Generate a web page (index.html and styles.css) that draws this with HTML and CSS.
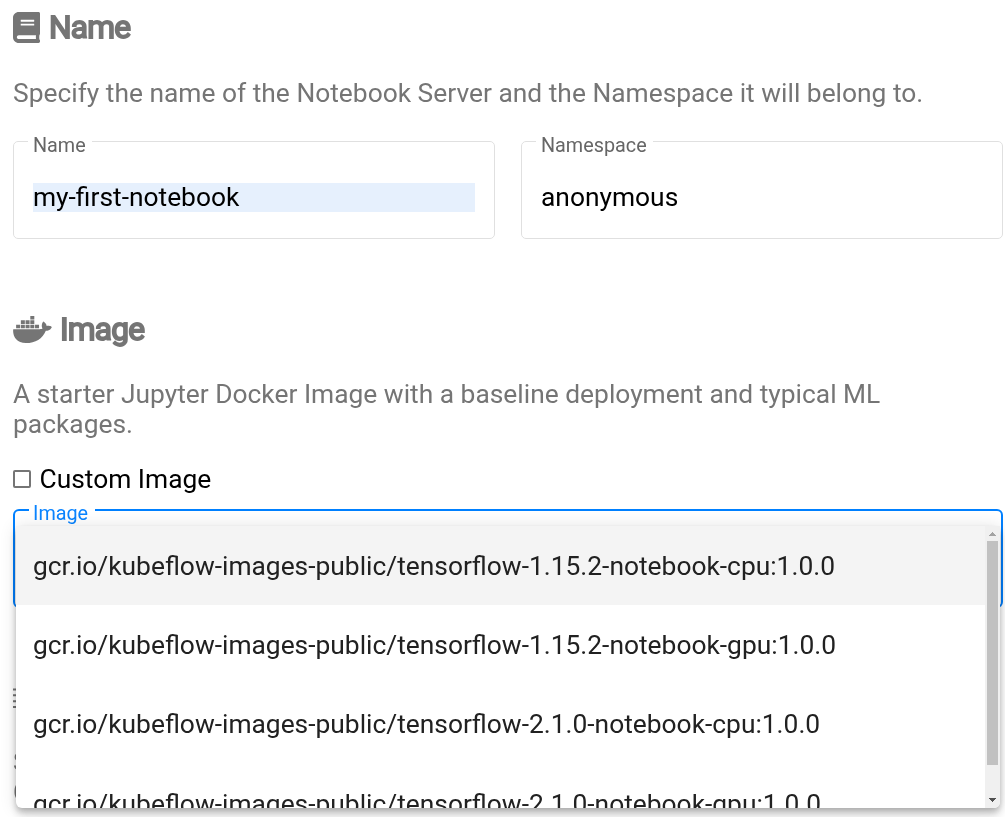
FILE: index.html
```html
<!DOCTYPE html>
<html lang="en">
<head>
<meta charset="utf-8">
<title>Notebook Server</title>
<link rel="stylesheet" href="styles.css">
</head>
<body>
<main class="form">
  <section class="section section-name">
    <h2 class="heading"><svg class="icon-book" viewBox="0 0 448 512"><path d="M448 360V24c0-13.300-10.700-24-24-24H96C43 0 0 43 0 96v320c0 53 43 96 96 96h328c13.300 0 24-10.700 24-24v-16c0-7.500-3.500-14.300-8.900-18.700-4.200-15.400-4.200-59.300 0-74.700 5.400-4.300 8.900-11.100 8.900-18.600zM128 134c0-3.300 2.700-6 6-6h212c3.300 0 6 2.700 6 6v20c0 3.300-2.700 6-6 6H134c-3.300 0-6-2.700-6-6v-20zm0 64c0-3.300 2.700-6 6-6h212c3.300 0 6 2.700 6 6v20c0 3.300-2.700 6-6 6H134c-3.300 0-6-2.700-6-6v-20zm253.400 250H96c-17.700 0-32-14.300-32-32 0-17.600 14.400-32 32-32h285.400c-1.900 17.100-1.900 46.900 0 64z"/></svg><span>Name</span></h2>
    <p class="description">Specify the name of the Notebook Server and the Namespace it will belong to.</p>
    <div class="fields">
      <fieldset class="field"><legend>Name</legend><div class="value autofilled">my-first-notebook</div></fieldset>
      <fieldset class="field"><legend>Namespace</legend><div class="value">anonymous</div></fieldset>
    </div>
  </section>
  <section class="section section-image">
    <h2 class="heading"><svg class="icon-docker" viewBox="0 0 640 512"><path d="M349.900 236.300h-66.100v-59.400h66.100v59.400zm0-204.300h-66.100v60.700h66.100V32zm78.200 144.800H362v59.400h66.100v-59.400zm-156.300-72.100h-66.100v60.100h66.100v-60.100zm78.100 0h-66.100v60.100h66.100v-60.100zm276.800 100c-14.400-9.700-47.600-13.200-73.100-8.400-3.300-24-16.700-44.900-41.100-63.700l-14-9.300-9.300 14c-18.400 27.800-23.400 73.600-3.700 103.800-8.700 4.700-25.800 11.100-48.400 10.700H2.400c-8.700 50.800 5.800 116.800 44 162.100 37.100 43.900 92.700 66.200 165.400 66.200 157.400 0 273.900-72.500 328.400-204.200 21.400.4 67.600.1 91.300-45.200 1.500-2.500 6.600-13.200 8.500-17.100l-13.300-8.900zm-511.100-27.900h-66v59.400h66.100v-59.400zm78.100 0h-66.100v59.400h66.100v-59.400zm78.100 0h-66.100v59.400h66.100v-59.400zm-78.100-72.100h-66.100v60.100h66.100v-60.100z"/></svg><span>Image</span></h2>
    <p class="description">A starter Jupyter Docker Image with a baseline deployment and typical ML packages.</p>
    <label class="custom"><span class="checkbox"></span>Custom Image</label>
    <fieldset class="field select-field"><legend>Image</legend></fieldset>
    <div class="dropdown">
      <ul class="options">
        <li class="option active">gcr.io/kubeflow-images-public/tensorflow-1.15.2-notebook-cpu:1.0.0</li>
        <li class="option">gcr.io/kubeflow-images-public/tensorflow-1.15.2-notebook-gpu:1.0.0</li>
        <li class="option">gcr.io/kubeflow-images-public/tensorflow-2.1.0-notebook-cpu:1.0.0</li>
        <li class="option">gcr.io/kubeflow-images-public/tensorflow-2.1.0-notebook-gpu:1.0.0</li>
      </ul>
      <div class="scrollbar">
        <svg class="arrow-up" viewBox="0 0 7 4"><path d="M3 0h1v1h1v1h1v1h1v1H0V3h1V2h1V1h1z"/></svg>
        <span class="thumb"></span>
        <svg class="arrow-down" viewBox="0 0 7 4"><path d="M0 0h7v1H6v1H5v1H4v1H3V3H2V2H1V1H0z"/></svg>
      </div>
    </div>
  </section>
  <section class="section-next">
    <svg class="icon-chip" viewBox="0 0 30 24"><path d="M0 1.500h3v2H0zM0 7.300h3v2H0zM0 13.200h3v2H0zM0 19h3v2H0zM4 0h22v24H4z"/></svg>
    <p class="description">S<br>C</p>
  </section>
</main>
</body>
</html>
```
FILE: styles.css
```css
* { box-sizing: border-box; }
body {
  margin: 0;
  height: 817px;
  overflow: hidden;
  background: #fff;
  color: #000;
  font-family: Roboto, sans-serif;
  font-size: 26.37px;
}
.form { padding: 0 2px 0 13px; will-change: transform; }
.section { position: relative; }
.section-name { height: 301px; padding-top: 8px; }
.section-image { height: 386px; padding-top: 9px; }
.heading {
  display: flex;
  align-items: center;
  height: 39px;
  margin: 0;
  color: #757575;
  font-size: 31.7px;
  font-weight: 400;
  letter-spacing: -.8px;
  -webkit-text-stroke: 1.8px #757575;
}
.heading svg { fill: #757575; flex: none; }
.icon-book { width: 27px; height: 31px; margin-right: 9px; }
.icon-docker { width: 39px; height: 31px; margin-right: 8px; }
.description {
  margin: 31px 0 0;
  color: #757575;
  line-height: 30px;
}
.section-image .description { margin-top: 30px; }
.fields { display: flex; gap: 26px; padding-top: 17px; }
.field {
  flex: 1;
  min-width: 0;
  height: 114px;
  margin: 0;
  padding: 26px 19px 0 14px;
  border: 1px solid #e0e0e0;
  border-radius: 5px;
}
.field legend {
  padding: 9px 6px 0 5px;
  color: #666;
  font-size: 19.8px;
  line-height: 23px;
}
.value { height: 29px; margin-left: 5px; line-height: 29px; }
.autofilled { background: #e6f0fd; }
.custom {
  display: flex;
  align-items: center;
  gap: 8.500px;
  height: 30px;
  margin-top: 25px;
}
.checkbox { width: 18px; height: 18px; border: 2px solid #757575; border-radius: 2px; }
.select-field { height: 113px; margin-top: 1px; border: 2px solid #0080ff; border-radius: 6px; }
.select-field legend { padding: 7px 7px 0 4px; color: #0a84ff; }
.dropdown {
  position: absolute;
  z-index: 2;
  top: 225px;
  left: 3px;
  display: flex;
  width: 984px;
  height: 282px;
  overflow: hidden;
  border-radius: 0 0 6px 6px;
  background: #fff;
  box-shadow: 0 3.300px 6.600px -1.600px rgba(0, 0, 0, .2), 0 6.600px 8.200px rgba(0, 0, 0, .14), 0 1.600px 16.500px rgba(0, 0, 0, .12);
}
.options { flex: 1; margin: 0; padding: 0; list-style: none; }
.option {
  height: 79.200px;
  padding-left: 17px;
  color: #212121;
  line-height: 80px;
  white-space: nowrap;
}
.active { background: #f4f4f4; }
.scrollbar {
  display: flex;
  flex-direction: column;
  align-items: center;
  width: 15px;
  padding: 6px 0 6px;
  background: #f0f0f0;
}
.arrow-up, .arrow-down { width: 7px; height: 4px; fill: #a3a3a3; }
.arrow-down { fill: #505050; margin-top: auto; }
.thumb { width: 11px; height: 224px; margin-top: 5px; background: #c1c1c1; }
.section-next .icon-chip { display: block; width: 30px; height: 24px; fill: #757575; }
.section-next .description { margin-top: 36px; }
```
